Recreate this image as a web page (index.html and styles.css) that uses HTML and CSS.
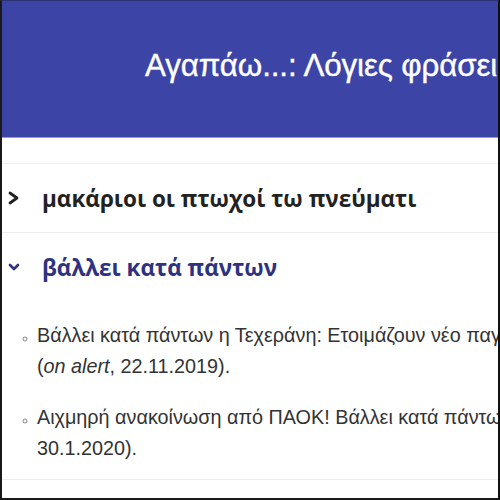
FILE: index.html
```html
<!DOCTYPE html>
<html lang="el">
<head>
<meta charset="utf-8">
<link rel="stylesheet" href="styles.css">
</head>
<body>
<div class="frame">
  <header class="top">
    <h1 class="title">Αγαπάω...: Λόγιες φράσεις και εκφράσεις</h1>
  </header>
  <div class="gap"></div>
  <section class="item">
    <div class="row">
      <svg class="chev" viewBox="0 0 12 14" width="12" height="14"><polyline points="2,2 9,7 2,12" fill="none" stroke="#222" stroke-width="2.8" stroke-linecap="round" stroke-linejoin="round"/></svg>
      <h2 class="head">μακάριοι οι πτωχοί τω πνεύματι</h2>
    </div>
  </section>
  <section class="item open">
    <div class="row">
      <svg class="chev" viewBox="0 0 12 10" width="12" height="10"><polyline points="2,3 6,7 10,3" fill="none" stroke="#2e3280" stroke-width="2.6" stroke-linecap="round" stroke-linejoin="round"/></svg>
      <h2 class="head navy">βάλλει κατά πάντων</h2>
    </div>
    <ul class="list">
      <li>Βάλλει κατά πάντων η Τεχεράνη: Ετοιμάζουν νέο παγκόσμιο πόλεμο<br>(<i>on alert</i>, 22.11.2019).</li>
      <li>Αιχμηρή ανακοίνωση από ΠΑΟΚ! Βάλλει κατά πάντων (<i>sdna</i>,<br>30.1.2020).</li>
    </ul>
  </section>
</div>
</body>
</html>
```
FILE: styles.css
```css
html, body {
  margin: 0;
  padding: 0;
  background: #fff;
}
.frame {
  width: 500px;
  height: 500px;
  box-sizing: border-box;
  overflow: hidden;
  border-left: 2px solid #1a1a1a;
  border-right: 2px solid #111;
  border-bottom: 2px solid #1a1a1a;
  border-top: 1px solid #2a3070;
  background: #fff;
  font-family: "Liberation Sans", Arial, sans-serif;
}
.top {
  height: 136px;
  background: #3c44a6;
  border-bottom: 1px solid #9299d3;
  display: flex;
  align-items: center;
  padding-left: 143px;
  overflow: hidden;
}
.title {
  margin: 0;
  margin-bottom: 6px;
  color: #fff;
  font-family: "Liberation Sans", Arial, sans-serif;
  font-weight: normal;
  font-size: 31.3px;
  letter-spacing: -0.1px;
  -webkit-text-stroke: 0.4px #fff;
  white-space: nowrap;
}
.gap {
  height: 25px;
}
.item {
  border-top: 1px solid #eeeeee;
}
.row {
  display: flex;
  align-items: center;
  height: 68px;
}
.chev {
  margin-left: 6px;
  margin-right: 22px;
  flex: none;
}
.head {
  margin: 0;
  font-family: "Open Sans", "Noto Sans", sans-serif;
  font-weight: bold;
  font-size: 22.5px;
  color: #222;
  white-space: nowrap;
}
.head.navy {
  color: #2e3280;
}
.open {
  border-bottom: 1px solid #eeeeee;
  height: 248px;
  box-sizing: border-box;
}
.list {
  margin: 0;
  padding: 19px 0 0 35px;
  list-style: circle;
  color: #333;
  font-size: 19.8px;
  line-height: 31px;
}
.list li {
  white-space: nowrap;
  margin-bottom: 20px;
}
.list li::marker {
  color: #888;
  font-size: 12px;
}
```
